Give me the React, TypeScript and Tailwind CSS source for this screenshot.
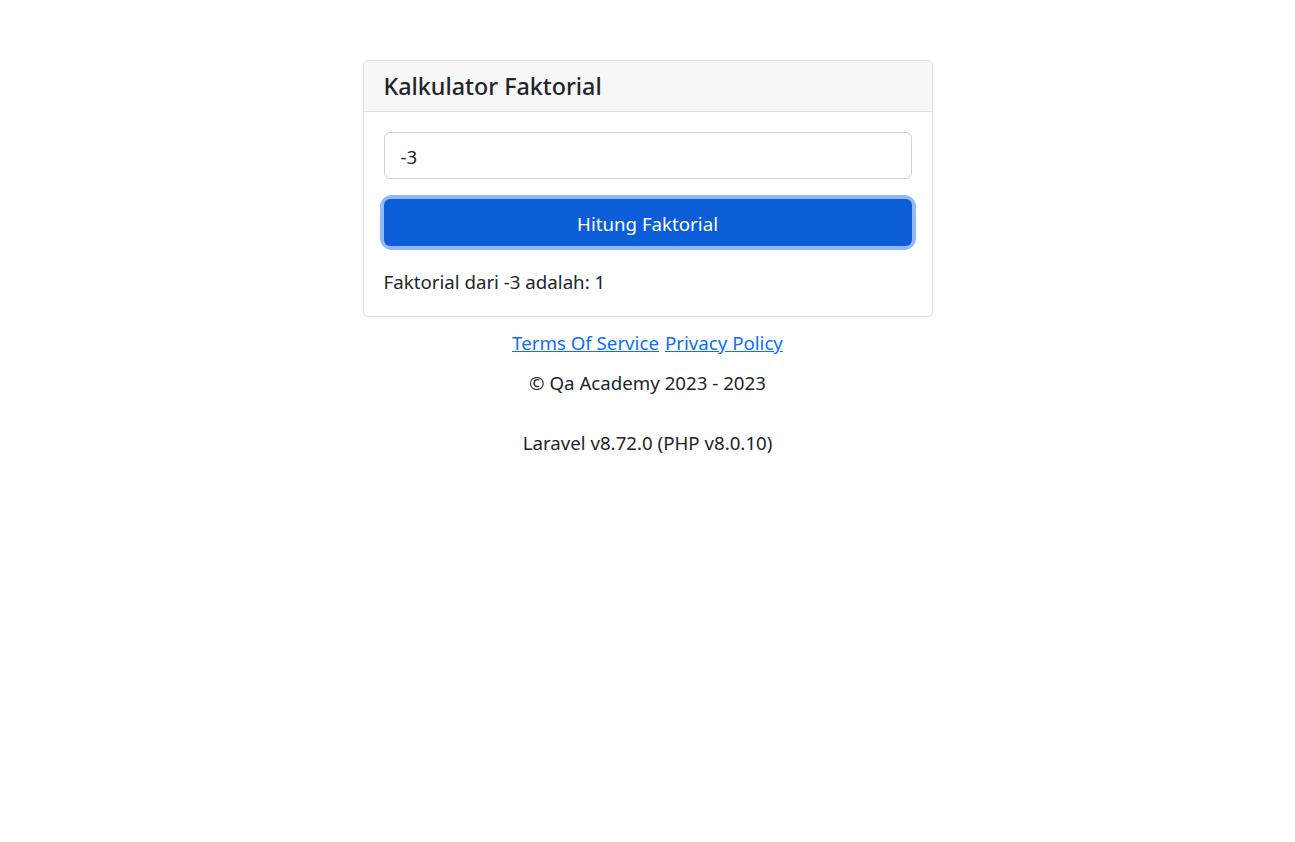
export default function App() {
  return (
    <div className="min-h-[842px] bg-white text-[#212529]" style={{ fontFamily: '"Noto Sans", "Open Sans", sans-serif' }}>
      <div className="flex flex-col items-center pt-[60px]">
        <div className="w-[570px] rounded-[5px] border border-[#dfdfdf] bg-white">
          <div className="flex h-[51px] items-center border-b border-[#dfdfdf] bg-[#f7f7f7] px-[20px] pt-[2px] rounded-t-[5px]">
            <h4 className="text-[23.3px] font-medium leading-none">Kalkulator Faktorial</h4>
          </div>
          <div className="px-[20px] pt-[20px] pb-[22px]">
            <div className="flex h-[47px] items-center rounded-[6px] border border-[#ced4da] px-[16px] pt-[3px] text-[18.7px]">-3</div>
            <div className="mt-[20px] rounded-[8px] p-0 shadow-[0_0_0_4px_#8fb9fb]">
              <button className="flex h-[47px] w-full items-center justify-center rounded-[6px] bg-[#0b5ed7] pt-[3px] text-[18.7px] text-white">
                Hitung Faktorial
              </button>
            </div>
            <p className="mt-[24px] text-[18.7px] leading-[24px]">Faktorial dari -3 adalah: 1</p>
          </div>
        </div>
        <div className="mt-[14px] flex gap-[6px] text-[18.7px] leading-[24px]">
          <a href="#" className="text-[#0d6efd] underline">Terms Of Service</a>
          <a href="#" className="text-[#0d6efd] underline">Privacy Policy</a>
        </div>
        <p className="mt-[16px] text-[18.7px] leading-[24px]">© Qa Academy 2023 - 2023</p>
        <p className="mt-[36px] text-[18.7px] leading-[24px]">Laravel v8.72.0 (PHP v8.0.10)</p>
      </div>
    </div>
  );
}
